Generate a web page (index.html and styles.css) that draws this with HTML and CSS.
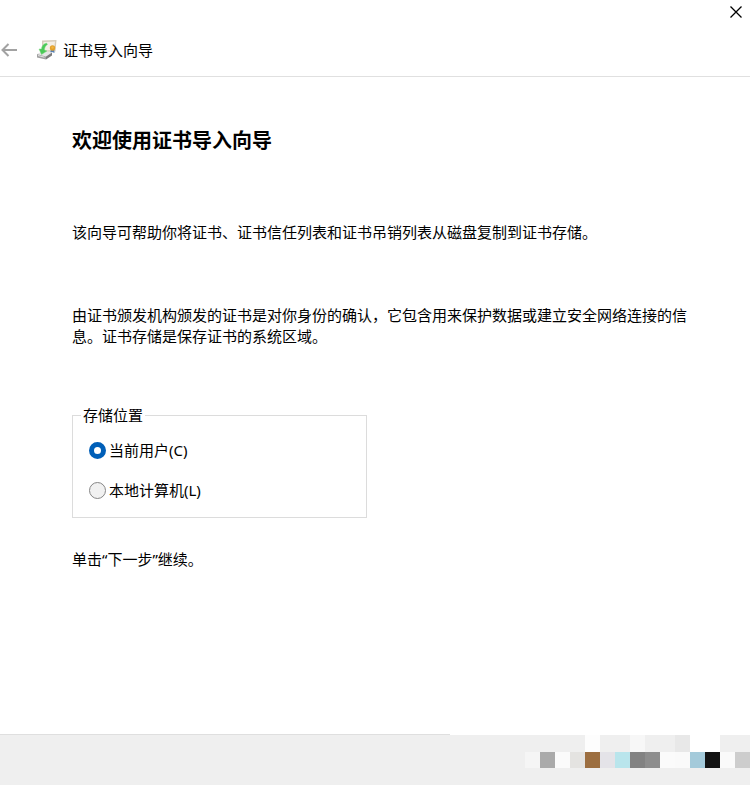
FILE: index.html
```html
<!DOCTYPE html>
<html lang="zh-CN">
<head>
    <meta charset="UTF-8">
    <title>证书导入向导</title>
    <link rel="stylesheet" href="styles.css">
</head>
<body>
    <!-- Window title bar -->
    <div class="title-bar">
        <button class="icon-button" type="button" aria-label="关闭">
            <svg width="12" height="12" viewBox="0 0 12 12"><path d="M0.5 0.5 L11.5 11.5 M11.5 0.5 L0.5 11.5" stroke="#000" stroke-width="1.3" fill="none"/></svg>
        </button>
    </div>

    <header class="wizard-header">
        <button class="icon-button" type="button" aria-label="返回">
            <svg width="18" height="16" viewBox="0 0 18 16"><path d="M17 8 H2.5 M8.5 2 L2.5 8 L8.5 14" stroke="#a2a2a2" stroke-width="2" fill="none"/></svg>
        </button>
        <svg class="wizard-icon" width="22" height="22" viewBox="0 0 22 22">
            <!-- Certificate -->
            <path d="M6 1.5 L20.5 1 L19.5 12.5 L6 13 Z" fill="#d6ccbb"/>
            <path d="M7.5 3 L19 2.5 L18 11 L7.5 11.5 Z" fill="#f4efe7"/>
            <path d="M15.5 9 L14 14 L16 13 L18.5 14 L18 9 Z" fill="#5680b5"/>
            <circle cx="16.5" cy="9" r="2.7" fill="#e3a02a"/>
            <circle cx="16.5" cy="8.5" r="1.2" fill="#f0b545"/>
            <!-- Disk drive -->
            <path d="M1 15 L7 12 L16 13.5 L10 17.5 Z" fill="#e6e6e6"/>
            <path d="M1 15 L10 17.5 V20.5 L1 18.5 Z" fill="#a0a0a0"/>
            <path d="M10 17.5 L16 13.5 V16.5 L10 20.5 Z" fill="#7c7c7c"/>
            <path d="M2 16.5 L8.5 18.2" stroke="#e2e2e2"/>
            <!-- Arrow -->
            <path d="M10.5 4 C7 5 5.5 7.5 5.5 10 L3 10 L5.5 15.5 L11 12 L8.5 11 C8.5 8.5 9.5 6.5 11.5 5.5 Z" fill="#4bc957" stroke="#80d985" stroke-width="0.5"/>
        </svg>
        <span>证书导入向导</span>
    </header>

    <main class="content">
        <h1>欢迎使用证书导入向导</h1>
        <p class="intro">该向导可帮助你将证书、证书信任列表和证书吊销列表从磁盘复制到证书存储。</p>
        <p class="details">由证书颁发机构颁发的证书是对你身份的确认，它包含用来保护数据或建立安全网络连接的信息。证书存储是保存证书的系统区域。</p>

        <fieldset class="store">
            <legend>存储位置</legend>
            <div class="option">
                <input type="radio" id="current-user" name="store" checked>
                <label for="current-user">当前用户(C)</label>
            </div>
            <div class="option">
                <input type="radio" id="local-machine" name="store">
                <label for="local-machine">本地计算机(L)</label>
            </div>
        </fieldset>

        <p>单击“下一步”继续。</p>
    </main>

    <div class="footer-line"></div>
    <footer class="footer">
        <!-- Pixelated area, 15px columns -->
        <svg class="mosaic" width="225" height="33" viewBox="0 0 225 33" shape-rendering="crispEdges">
            <rect x="60" y="0" width="15" height="17" fill="#fdfdfd"/>
            <rect x="105" y="0" width="15" height="17" fill="#f7f7f7"/>
            <rect x="150" y="0" width="15" height="17" fill="#e8e8e8"/>
            <rect x="165" y="0" width="30" height="17" fill="#ffffff"/>
            <rect x="0" y="17" width="15" height="16" fill="#f5f5f5"/>
            <rect x="15" y="17" width="15" height="16" fill="#aaaaaa"/>
            <rect x="30" y="17" width="15" height="16" fill="#fbfbfb"/>
            <rect x="45" y="17" width="15" height="16" fill="#e4e3e1"/>
            <rect x="60" y="17" width="15" height="16" fill="#9c6e40"/>
            <rect x="75" y="17" width="15" height="16" fill="#e4e3e8"/>
            <rect x="90" y="17" width="15" height="16" fill="#b9e5ec"/>
            <rect x="105" y="17" width="15" height="16" fill="#828282"/>
            <rect x="120" y="17" width="15" height="16" fill="#8d8d8d"/>
            <rect x="135" y="17" width="15" height="16" fill="#fbfbfb"/>
            <rect x="150" y="17" width="15" height="16" fill="#fafafa"/>
            <rect x="165" y="17" width="15" height="16" fill="#a4cada"/>
            <rect x="180" y="17" width="15" height="16" fill="#131313"/>
            <rect x="195" y="17" width="15" height="16" fill="#fafafa"/>
            <rect x="210" y="17" width="15" height="16" fill="#cdcdcd"/>
        </svg>
    </footer>
</body>
</html>
```
FILE: styles.css
```css
* {
    box-sizing: border-box;
}
body {
    margin: 0;
    min-height: 100vh;
    display: flex;
    flex-direction: column;
    background-color: #fff;
    color: #000;
    font-family: "Noto Sans", "Noto Sans CJK SC", sans-serif;
    font-size: 15px;
    line-height: 21px;
}
h1, p {
    margin: 0;
}
.icon-button {
    display: flex;
    padding: 0;
    border: none;
    background: none;
    cursor: pointer;
}
.title-bar {
    display: flex;
    justify-content: flex-end;
    align-items: center;
    height: 24px;
    padding-right: 8px;
}
.wizard-header {
    display: flex;
    align-items: center;
    height: 53px;
    border-bottom: 1px solid #e0e0e0;
}
.wizard-icon {
    margin: 0 5px 0 18px;
}
.content {
    flex: 1;
    padding: 49px 60px 48px 72px;
}
h1 {
    font-size: 20px;
    line-height: 30px;
    font-weight: bold;
}
.intro {
    margin-top: 66px;
}
.details {
    margin-top: 62px;
}
.store {
    max-width: 295px;
    margin: 58px 0 31px;
    padding: 14px 16px 16px;
    border: 1px solid #dcdcdc;
}
.store legend {
    margin-left: -8px;
    padding: 0 2px;
}
.option {
    display: flex;
    align-items: center;
    gap: 3px;
}
.option + .option {
    margin-top: 19px;
}
.option input {
    appearance: none;
    width: 17px;
    height: 17px;
    margin: 0;
    border: 1px solid #868686;
    border-radius: 50%;
    background-color: #f1f1f1;
}
.option input:checked {
    border: 5px solid #005fb8;
    background-color: #fff;
}
.footer-line {
    width: 60%;
    height: 1px;
    background-color: #dfdfdf;
}
.footer {
    height: 50px;
    background-color: #efefef;
}
.mosaic {
    display: block;
    margin-left: auto;
}
```
